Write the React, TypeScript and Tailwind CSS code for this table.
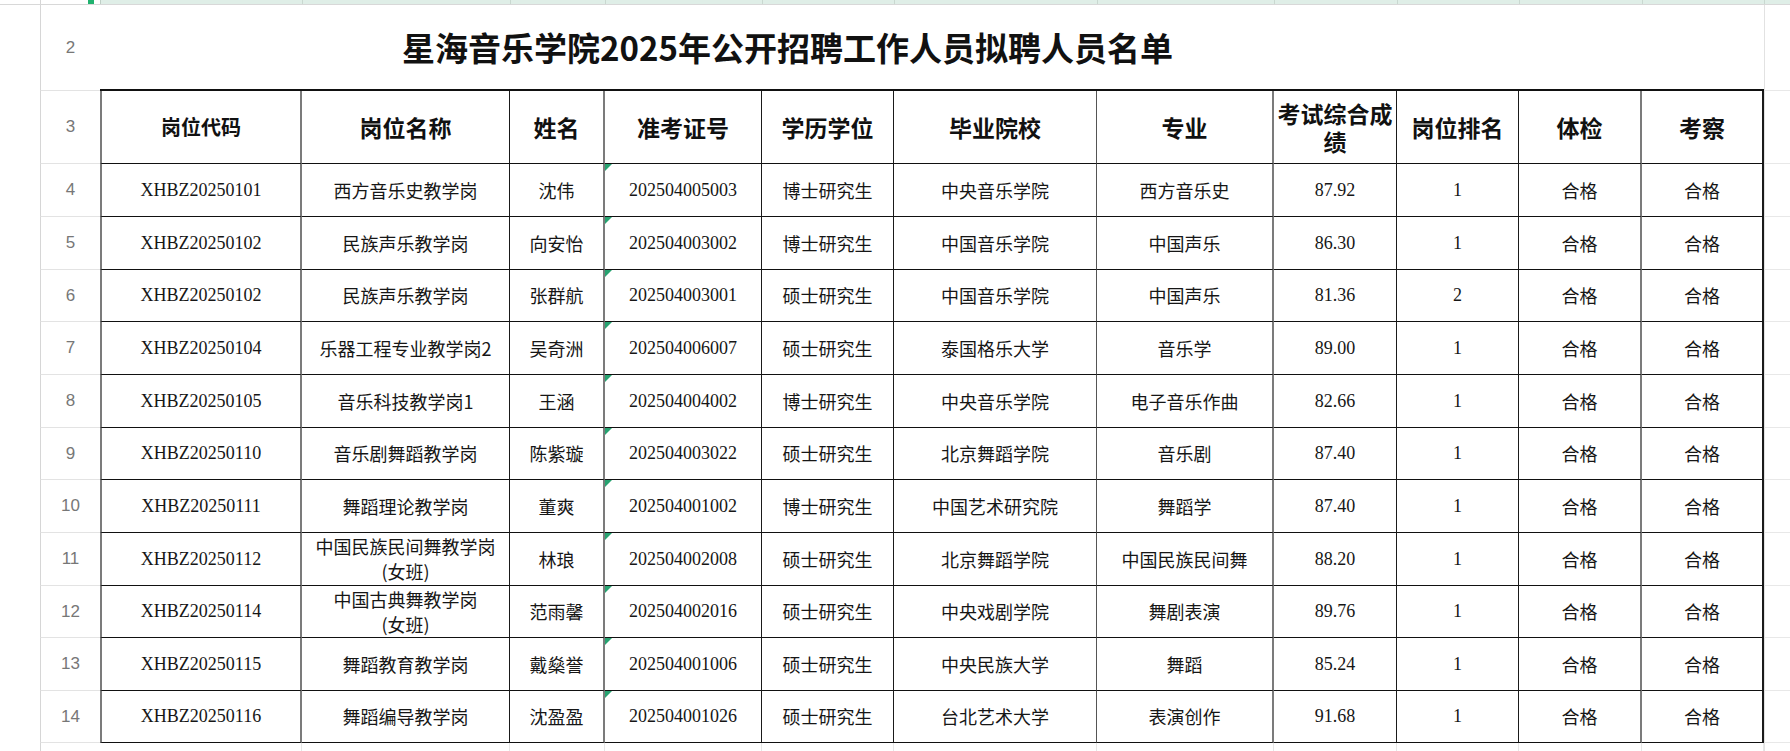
import React from "react";

const W = [
  "w-[202px]",
  "w-[208px]",
  "w-[95px]",
  "w-[157px]",
  "w-[132px]",
  "w-[203px]",
  "w-[177px]",
  "w-[123px]",
  "w-[122px]",
  "w-[123px]",
  "w-[122px]",
];

const RB = [
  "border-l-2 border-l-[#7b7b7b] border-r-2 border-r-[#7b7b7b]",
  "border-r border-r-[#1a1a1a]",
  "border-r-2 border-r-[#7b7b7b]",
  "border-r border-r-[#1a1a1a]",
  "border-r border-r-[#1a1a1a]",
  "border-r border-r-[#555]",
  "border-r-2 border-r-[#7b7b7b]",
  "border-r border-r-[#1a1a1a]",
  "border-r border-r-[#1a1a1a]",
  "border-r-2 border-r-[#7b7b7b]",
  "border-r-2 border-r-[#1a1a1a]",
];

const CJK = "font-['Noto_Sans_CJK_SC',sans-serif]";
const SERIF = "font-['Liberation_Serif','Noto_Sans_CJK_SC',serif]";

const headers = [
  "岗位代码",
  "岗位名称",
  "姓名",
  "准考证号",
  "学历学位",
  "毕业院校",
  "专业",
  "考试综合成绩",
  "岗位排名",
  "体检",
  "考察",
];

type R = string[];
const rows: R[] = [
  ["XHBZ20250101", "西方音乐史教学岗", "沈伟", "202504005003", "博士研究生", "中央音乐学院", "西方音乐史", "87.92", "1"],
  ["XHBZ20250102", "民族声乐教学岗", "向安怡", "202504003002", "博士研究生", "中国音乐学院", "中国声乐", "86.30", "1"],
  ["XHBZ20250102", "民族声乐教学岗", "张群航", "202504003001", "硕士研究生", "中国音乐学院", "中国声乐", "81.36", "2"],
  ["XHBZ20250104", "乐器工程专业教学岗2", "吴奇洲", "202504006007", "硕士研究生", "泰国格乐大学", "音乐学", "89.00", "1"],
  ["XHBZ20250105", "音乐科技教学岗1", "王涵", "202504004002", "博士研究生", "中央音乐学院", "电子音乐作曲", "82.66", "1"],
  ["XHBZ20250110", "音乐剧舞蹈教学岗", "陈紫璇", "202504003022", "硕士研究生", "北京舞蹈学院", "音乐剧", "87.40", "1"],
  ["XHBZ20250111", "舞蹈理论教学岗", "董爽", "202504001002", "博士研究生", "中国艺术研究院", "舞蹈学", "87.40", "1"],
  ["XHBZ20250112", "中国民族民间舞教学岗|(女班)", "林琅", "202504002008", "硕士研究生", "北京舞蹈学院", "中国民族民间舞", "88.20", "1"],
  ["XHBZ20250114", "中国古典舞教学岗|(女班)", "范雨馨", "202504002016", "硕士研究生", "中央戏剧学院", "舞剧表演", "89.76", "1"],
  ["XHBZ20250115", "舞蹈教育教学岗", "戴燊誉", "202504001006", "硕士研究生", "中央民族大学", "舞蹈", "85.24", "1"],
  ["XHBZ20250116", "舞蹈编导教学岗", "沈盈盈", "202504001026", "硕士研究生", "台北艺术大学", "表演创作", "91.68", "1"],
];

const heights = [
  "h-[53px]",
  "h-[53px]",
  "h-[52px]",
  "h-[53px]",
  "h-[53px]",
  "h-[52px]",
  "h-[53px]",
  "h-[53px]",
  "h-[52px]",
  "h-[53px]",
  "h-[52px]",
];

function RowHead({ n }: { n: string }) {
  return (
    <div className="w-[60px] shrink-0 border-l border-l-[#d6d6d6] border-b border-b-[#e3e3e3] flex items-center justify-center text-[17px] text-[#777] font-['Liberation_Sans',sans-serif]">
      {n}
    </div>
  );
}

function Ext() {
  return <div className="flex-1 border-l border-l-[#e2e2e2] border-b border-b-[#e8e8e8]" />;
}

function Tri() {
  return (
    <svg className="absolute left-0 top-0" width="7" height="7" viewBox="0 0 7 7">
      <polygon points="0,0 7,0 0,7" fill="#27a371" />
    </svg>
  );
}

export default function App() {
  return (
    <div className="w-[1790px] h-[751px] overflow-hidden bg-white flex flex-col">
      {/* row 1 */}
      <div className="flex h-[5px] shrink-0 border-b border-b-[#d8d8d8]">
        <div className="w-[40px] shrink-0" />
        <div className="w-[60px] shrink-0 border-l border-l-[#d6d6d6] flex justify-end">
          <div className="w-[6px] h-[4px] bg-[#21b26f] mr-[6px]" />
        </div>
        <div className="flex bg-[#dfeee7]">
          {W.map((w, i) => (
            <div key={i} className={`${w} border-l border-l-[#c9d8d0] first:border-l-[#bfcfc6]`} />
          ))}
        </div>
        <div className="flex-1 bg-[#dfeee7] border-l border-l-[#c9d8d0]" />
      </div>

      {/* row 2 title */}
      <div className="flex h-[86px] shrink-0">
        <div className="w-[40px] shrink-0" />
        <RowHead n="2" />
        <div className="w-[1664px] shrink-0 border-b-2 border-b-[#111] flex items-center pl-[302px]">
          <span className={`${CJK} font-bold text-[33px] text-[#111] leading-none`}>
            星海音乐学院2025年公开招聘工作人员拟聘人员名单
          </span>
        </div>
        <Ext />
      </div>

      {/* row 3 header */}
      <div className="flex h-[73px] shrink-0">
        <div className="w-[40px] shrink-0" />
        <RowHead n="3" />
        <div className="flex shrink-0">
          {headers.map((h, i) => (
            <div
              key={i}
              className={`${W[i]} ${RB[i]} border-b border-b-[#111] flex items-center justify-center text-center px-[3px] ${CJK} font-bold ${
                i === 0 ? "text-[20px]" : "text-[23px]"
              } leading-[28px] text-[#111]`}
            >
              {h}
            </div>
          ))}
        </div>
        <Ext />
      </div>

      {/* data rows */}
      {rows.map((r, ri) => (
        <div key={ri} className={`flex ${heights[ri]} shrink-0`}>
          <div className="w-[40px] shrink-0" />
          <RowHead n={String(ri + 4)} />
          <div className="flex shrink-0">
            {[...r, "合格", "合格"].map((v, ci) => {
              const serif = ci === 0 || ci === 3 || ci === 7 || ci === 8;
              return (
                <div
                  key={ci}
                  className={`${W[ci]} ${RB[ci]} relative border-b border-b-[#111] flex flex-col items-center justify-center text-center text-[#161616] ${
                    serif ? `${SERIF} text-[18px]` : `${CJK} text-[18px] leading-[25px]`
                  }`}
                >
                  {ci === 3 && <Tri />}
                  {v.split("|").map((line, li) => (
                    <span key={li}>{line}</span>
                  ))}
                </div>
              );
            })}
          </div>
          <Ext />
        </div>
      ))}

      {/* row 15 partial */}
      <div className="flex h-[53px] shrink-0">
        <div className="w-[40px] shrink-0" />
        <RowHead n="15" />
        <div className="flex shrink-0">
          {W.map((w, i) => (
            <div key={i} className={`${w} border-r border-r-[#e6e6e6]`} />
          ))}
        </div>
        <Ext />
      </div>
    </div>
  );
}
